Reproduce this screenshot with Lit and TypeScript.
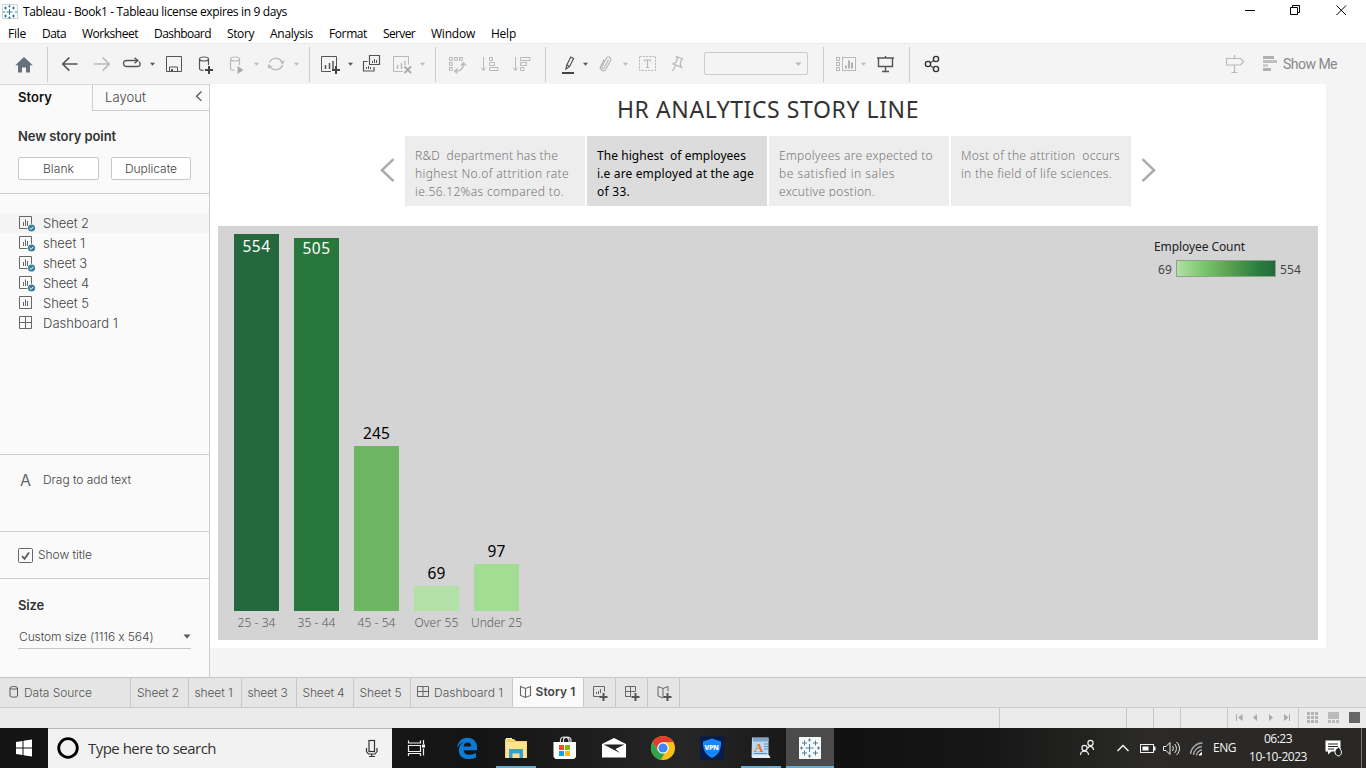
import { LitElement, html, svg, css, nothing, TemplateResult } from "lit";
import { customElement, property } from "lit/decorators.js";

/** A single line of text, tracked so that it spans `span` pixels. */
@customElement("text-run")
class TextRun extends LitElement {
  @property() text = "";
  @property({ type: Number }) span = 0;
  static styles = css`
    :host { display: block; white-space: pre; flex: none; overflow: visible; }
    .run { display: inline-block; }
  `;
  updated() {
    const el = this.renderRoot.querySelector(".run") as HTMLElement;
    el.style.letterSpacing = "0px";
    const natural = el.getBoundingClientRect().width;
    el.style.letterSpacing = `${(this.span - natural) / this.text.length}px`;
    this.style.width = `${this.span}px`;
  }
  render() {
    return html`<span class="run">${this.text}</span>`;
  }
}

const t = (text: string, span: number, cls = "") =>
  html`<text-run class=${cls} .text=${text} .span=${span}></text-run>`;

/** One strip cell: an svg tile covering x..x2 of a bar that starts at y with height h. */
const tile = (x: number, x2: number, y: number, h: number, body: unknown) =>
  html`<svg class="tile" width=${x2 - x} height=${h} viewBox="${x} ${y} ${x2 - x} ${h}" fill="none">${body}</svg>`;

const DARK = "#555";
const DIM = "#b9b9b9";

const caret = (x: number, c = DIM) => svg`<path d="M${x - 2.5} 62.8h5l-2.5 3z" fill=${c}/>`;
const plus = (x: number, y: number, r = 4) => svg`<path d="M${x - r} ${y}h${2 * r}M${x} ${y - r}v${2 * r}" stroke="#444" stroke-width="2"/>`;
const cyl = (x: number, c: string) => svg`<g stroke=${c} stroke-width="1.2"><ellipse cx=${x + 4.5} cy="59" rx="4.5" ry="2"/><path d="M${x} 59v9.5c0 1 1.5 1.8 4 1.8M${x + 9} 59v6"/></g>`;
const squares = (pts: number[][], s: number, c: string) =>
  pts.map(([x, y]) => svg`<rect x=${x} y=${y} width=${s} height=${s} stroke=${c} stroke-width="1"/>`);

const toolGroups: [number, number, unknown][][] = [
  [[0, 47, svg`<path d="M15.3 65.2 24 57l8.800 8.200H30V72.500h-4V67.500h-4v5h-4v-7.300z" fill="#66717d"/>`]],
  [
    [48, 86, svg`<path d="M62.500 64H77.500M69.300 57.600 62.700 64l6.600 6.600" stroke=${DARK} stroke-width="1.600"/>`],
    [86, 118, svg`<path d="M94 64h15M102.700 57.600l6.600 6.400-6.600 6.600" stroke=${DIM} stroke-width="1.500"/>`],
    [118, 160, svg`<path d="M137 60.500H127c-4.600 0-4.600 6 0 6h10.500c3 0 3.500-3 1.500-4.800M134.500 57.700l3.500 2.800-3.500 2.800" stroke=${DARK} stroke-width="1.300"/>${caret(152.500, DARK)}`],
    [160, 190, svg`<path d="M166.500 56.500h15v15h-15zM169.500 71.500v-4.500h8v4.500" stroke=${DARK}/><path d="M171 69h2v2.500h-2z" fill=${DARK}/>`],
    [190, 222, svg`${cyl(199.5, DARK)}${plus(209, 70)}`],
    [222, 262, svg`${cyl(230.5, DIM)}<path d="M237.500 66l6 4-6 4z" fill="#aaa"/>${caret(256.500)}`],
    [262, 309, svg`<path d="M269.500 62.500a7 6.500 0 0 1 12.500-1M282.500 65a7 6.500 0 0 1-12.500 1.800" stroke=${DIM} stroke-width="1.300"/><path d="M284.500 60.500l-1.500 4-3.200-2.800zM267.500 68.500l1-4.500 3.500 2.800z" fill=${DIM}/>${caret(296.500)}`],
  ],
  [
    [310, 356, svg`<path d="M331 71.500h-9.500v-15h15V66" stroke=${DARK}/><path d="M325.500 69v-4M329.500 69v-6M333 69v-8" stroke=${DARK} stroke-width="1.500"/>${plus(336, 70)}${caret(350.500, DARK)}`],
    [356, 386, svg`<path d="M369.500 55.500h10v9h-10zM367.500 61.500h-4v9.500h10.500v-4" stroke=${DARK} stroke-width="1.200"/><path d="M372.500 63v-2M374.500 63v-4M376.500 63v-3M366.500 69v-2M368.500 69v-3M370.500 69v-2" stroke=${DARK}/>`],
    [386, 435, svg`<path d="M403 71.500h-9.500v-15h15V64.500" stroke=${DIM}/><path d="M397.500 69v-4M401.500 69v-6M405 65v-4" stroke=${DIM} stroke-width="1.400"/><path d="M404.500 66.500l6.500 6.500M411 66.500l-6.500 6.500" stroke="#aaa" stroke-width="1.800"/>${caret(422.500)}`],
  ],
  [
    [436, 474, svg`${squares([[449.5, 57.5], [454.5, 57.5], [459.5, 57.5], [449.5, 62.5], [449.5, 67.5]], 2.8, DIM)}<path d="M463.500 63.500c0 5-3 7.500-8 7.800M461 65.500l2.500-2.800 2.300 2.800M457.500 68.500l-2.800 2.800 2.800 2.300" stroke=${DIM} stroke-width="1.300"/>`],
    [474, 506, svg`<path d="M483.500 57v13M481 67.500l2.500 3 2.500-3M489.500 57.500h3v3h-3zM489.500 62.500h5v3h-5zM489.500 67.500h8.500v3h-8.500z" stroke=${DIM}/>`],
    [506, 545, svg`<path d="M515.500 57v13M513 67.500l2.500 3 2.500-3M520.500 57.500h9.500v3h-9.500zM520.500 62.500h6v3h-6zM520.500 67.500h3.500v3h-3.500z" stroke=${DIM}/>`],
  ],
  [
    [546, 592, svg`<path d="M566 69l.8-4 4-8 2.800 1.400-4 8zM567 65l2.600 1.500" stroke=${DARK} stroke-width="1.200"/><path d="M562 72h12v2h-12z" fill="#444"/>${caret(585.500, DARK)}`],
    [592, 632, svg`<path d="M608.500 59.500l-4 8c-1 2-3.300.8-2.400-1l4-8c1.700-3 5.700-1 4.400 2l-4.500 8.500c-2 3.600-7 1.200-5.400-2.400l3.500-7" stroke=${DIM} stroke-width="1.200"/>${caret(625.500)}`],
    [632, 662, svg`<rect x="639.500" y="56.500" width="16" height="14" stroke=${DIM} stroke-dasharray="2.200 1"/><path d="M644.500 61.500v-1.500h6v1.500M647.500 60v7.500M646 67.500h3" stroke=${DIM} stroke-width="1.200"/>`],
    [662, 696, svg`<path d="M676.500 56.500l6 2.500-1.500 1.500-.7 3.500 1.200 3.300-8.500-3.400 3-1.700 1.300-3.200zM675.500 66l-3 5" stroke=${DIM} stroke-width="1.300"/>`],
    [696, 823, svg`<rect x="704.500" y="52.500" width="103" height="22" rx="1.500" stroke="#cdcdcd"/><path d="M795 62.500h6.500l-3.200 3.300z" fill=${DIM}/>`],
  ],
  [
    [824, 870, svg`${squares([[836.5, 57.5], [836.5, 62.5], [836.5, 67.5]], 3, DIM)}<rect x="842.500" y="57.500" width="13" height="13" stroke=${DIM}/><path d="M846 68.500v-3M849 68.500v-8M852 68.500v-6" stroke="#aaa" stroke-width="1.800"/>${caret(863.500)}`],
    [870, 909, svg`<path d="M877 58h17M878.500 58v8.500h14V58M885.500 66.500v5M882 71.500h7M885.500 56v2" stroke=${DARK} stroke-width="1.400"/>`],
  ],
  [[910, 950, svg`<path d="M930 63l4-2.500M930 65.500l4 2.500" stroke=${DARK} stroke-width="1.300"/><g stroke="#333" stroke-width="1.400"><circle cx="928" cy="64" r="2.600"/><circle cx="936" cy="59" r="2.600"/><circle cx="936" cy="69" r="2.600"/></g>`]],
];

const chartIcon = (checked: boolean) => svg`
  <path d="M1.500 2.500h12v12h-12z" stroke="#666"/><path d="M5.500 12V8M7.500 12V5.500M9.500 12V7" stroke="#666"/>
  ${checked ? svg`<circle cx="13.500" cy="14" r="4.200" fill="#fafafa"/><circle cx="13.500" cy="14" r="3.600" fill="#397f99"/><path d="M11.700 14l1.400 1.400 2.300-2.600" stroke="#fff"/>` : nothing}`;
const gridIcon = svg`<path d="M1.500 2.500h12v12h-12zM7.500 2.500v12M1.500 8.500h12" stroke="#666"/>`;

const sheets: [string, number, string][] = [
  ["Sheet 2", 46, "used"], ["sheet 1", 42, "used"], ["sheet 3", 44, "used"],
  ["Sheet 4", 46, "used"], ["Sheet 5", 46, "free"], ["Dashboard 1", 75, "dash"],
];

const points: { lines: [string, number][]; active?: boolean }[] = [
  { lines: [["R&D  department has the", 143], ["highest No.of attrition rate", 154], ["ie.56.12%as compared to.", 149]] },
  { lines: [["The highest  of employees", 149], ["i.e are employed at the age", 157], ["of 33.", 33]], active: true },
  { lines: [["Empolyees are expected to", 154], ["be satisfied in sales", 116], ["excutive postion.", 96]] },
  { lines: [["Most of the attrition  occurs", 159], ["in the field of life sciences.", 151]] },
];

const bars = [
  { label: "25 - 34", lw: 38, value: "554", vw: 28, h: 377, fill: "#24693d", place: "top" },
  { label: "35 - 44", lw: 38, value: "505", vw: 28, h: 373, fill: "#28783e", place: "edge" },
  { label: "45 - 54", lw: 38, value: "245", vw: 27, h: 165, fill: "#6fb663", place: "out" },
  { label: "Over 55", lw: 44, value: "69", vw: 18, h: 25, fill: "#b3e0a6", place: "out" },
  { label: "Under 25", lw: 51, value: "97", vw: 18, h: 47, fill: "#a3dc93", place: "out" },
];

const plusIcon = (x: number) => svg`<path d="M${x - 3.5} 697h8M${x + 0.5} 693v8" stroke="#555" stroke-width="2"/>`;

const appIcons: [number, number, string, unknown][] = [
  [392, 440, "", svg`<path d="M408.500 743v-2.500M420.500 743v-2.500M408.500 740.500v2.500h12v-2.500M408.500 745.500h12v6h-12zM408.500 756v-2.500h12v2.500M423.500 740v4M423.500 748.500v7" stroke="#f2f2f2" stroke-width="1.200"/><path d="M422 744.500h3v3h-3z" fill="#fff"/>`],
  [440, 493, "", svg`<path d="M457 748c.8-6.500 5-10.300 10.300-10.300 6.200 0 9.700 4.300 9.700 9.500v3h-13.400c.2 3 2.700 4.600 6 4.600 2.300 0 4.500-.6 6.400-1.700v4.300c-2 1-4.700 1.600-7.400 1.600-6 0-9.800-3.400-9.800-8.800 0-3.400 1.800-6.300 4.900-8-3 .8-5.200 2.700-6.700 5.800zM463.600 746.500h7.600c0-2.400-1.200-3.900-3.600-3.900-2.200 0-3.700 1.500-4 3.900z" fill="#0c7bd8" fill-rule="evenodd"/>`],
  [493, 540, "", svg`<path d="M505 739h9l2 2h11v17h-22z" fill="#f3d06b"/><path d="M506 742h20.500v16H506z" fill="#fbe295"/><path d="M509 749h14v9h-3.500v-4.500h-7v4.500H509z" fill="#3a9fd0"/><path d="M506 738.500h6" stroke="#fff3c4"/><path d="M496 766h40v2h-40z" fill="#69abd0"/>`],
  [540, 589, "", svg`<path d="M553.500 742h22.500v15l-2 2h-18.500l-2-2z" fill="#fff"/><path d="M560.500 742v-2c0-3.500 7-4.500 8.500 0v2M563.500 742v-2.500c1-3.500 6.500-3 7.500 0v2.500" stroke="#ddd" stroke-width="1.200"/><path d="M559 745h5v5h-5z" fill="#f05022"/><path d="M565 745h5v5h-5z" fill="#7fba00"/><path d="M559 751h5v5h-5z" fill="#00a4ef"/><path d="M565 751h5v5h-5z" fill="#ffb900"/>`],
  [589, 638, "", svg`<path d="M602 744l12-6 12 6v13.500h-24z" fill="#fff"/><path d="M603.500 744.500h21l-9 4.500 4.500 4z" fill="#222"/>`],
  [638, 687, "", svg`<circle cx="663" cy="748" r="12" fill="#fbc116"/><path d="M652.600 742a12 12 0 0 0 8.400 17.800l5.500-9.800-8.500 1z" fill="#2da44e"/><path d="M652.600 742a12 12 0 0 1 20.900 0H663l-5 8.500z" fill="#e33b2e"/><circle cx="663" cy="748" r="5.800" fill="#fff"/><circle cx="663" cy="748" r="4.600" fill="#4285f4"/>`],
  [687, 736, "", svg`<path d="M700 736.500h24v23h-24z" fill="#061d4b"/><path d="M712 738.500l9 3c.5 8-2.500 13.500-9 16.500-6.500-3-9.500-8.500-9-16.500z" fill="#1687f8"/>`],
  [736, 786, "", svg`<path d="M752 737.500h16.500v18.500l1.500 2h-16.500l-2-1z" fill="#bcd9f0"/><path d="M753 738h15.500v3.500H753z" fill="#7ba6ce"/><path d="M764 744h4M764 746.500h4M764 749h4M754 753.500h13" stroke="#5c8fc7"/><path d="M752 755h17l1.500 3h-18z" fill="#e9edf1"/><path d="M741 766h40v2h-40z" fill="#69abd0"/>`],
  [786, 834, "on", svg`<path d="M799 737h22v22h-22z" fill="#f5f7f8"/><path d="M809.500 744v8M805.500 748h8M804.500 740.500v5M802 743h5M815.500 740.500v5M813 743h5M804.500 750.500v5M802 753h5M815.500 750.500v5M813 753h5M809.500 738.500v3M808 740h3M809.500 754.500v3M808 756h3M801.500 746.500v3M800 748h3M818.500 746.500v3M817 748h3" stroke="#4e7f9c"/><path d="M786 766h48v2h-48z" fill="#69abd0"/>`],
];

@customElement("app-root")
class AppRoot extends LitElement {
  static styles = css`
    :host { display: flex; flex-direction: column; width: 1366px; height: 768px; overflow: hidden; background: #f4f4f4; font-family: "Open Sans", "Noto Sans", sans-serif; font-size: 12px; line-height: 18px; color: #000; }
    * { box-sizing: border-box; }
    svg { display: block; flex: none; }
    .row { display: flex; align-items: center; }
    .titlebar { height: 24px; background: #fff; }
    .titlebar .tail { margin-left: auto; }
    .menu { height: 19px; background: #fff; padding-left: 8px; }
    .menu text-run { margin-right: 16px; line-height: 19px; }
    .toolbar { height: 41px; background: #f4f4f4; border-top: 1px solid #ebebeb; display: flex; }
    .group { display: flex; align-items: center; }
    .group::after { content: ""; width: 1px; height: 35px; background: #cdcdcd; }
    .group:last-of-type::after { display: none; }
    .show { margin-left: auto; display: flex; align-items: center; width: 146px; }
    .showme { font-family: Roboto, sans-serif; font-size: 14px; color: #888; margin-left: 3px; }
    .main { display: flex; height: 593px; }

    .side { width: 210px; background: #fafafa; border-right: 1px solid #cdcdcd; display: flex; flex-direction: column; font-family: Inter, "Open Sans", sans-serif; font-weight: 300; color: #444; }
    .modes { display: flex; height: 27px; }
    .mode { width: 92px; padding: 3px 0 0 18px; border-top: 1px solid #d8d8d8; font-weight: 600; color: #111; font-size: 13px; }
    .mode.off { width: 117px; padding-left: 12px; border-left: 1px solid #cdcdcd; border-bottom: 1px solid #cdcdcd; font-weight: 300; color: #444; display: flex; }
    .mode.off svg { margin: 2px 0 0 48px; }
    .newpoint { height: 83px; padding: 16px 18px 0; border-bottom: 1px solid #cdcdcd; }
    .heading { font-weight: 600; font-size: 13px; color: #333; }
    .buttons { display: flex; gap: 12px; margin-top: 12px; }
    .btn { height: 23px; width: 81px; border: 1px solid #c8c8c8; border-radius: 2px; background: #fff; display: flex; justify-content: center; align-items: center; }
    .btn + .btn { width: 80px; }
    .sheets { height: 261px; padding-top: 19px; border-bottom: 1px solid #cdcdcd; font-size: 13px; }
    .sheet { height: 20px; display: flex; align-items: center; padding-left: 18px; gap: 7px; }
    .sheet:first-child { background: #f4f4f4; }
    .drag { height: 77px; border-bottom: 1px solid #cdcdcd; display: flex; padding: 16px 0 0 20px; }
    .drag .txt { margin-left: 12px; }
    .glyph { font-size: 16px; font-weight: 400; color: #666; }
    .title-opt { height: 47px; border-bottom: 1px solid #cdcdcd; padding-left: 18px; gap: 5px; }
    .size { padding: 17px 18px 0; }
    .select { height: 24px; width: 173px; margin-top: 11px; border-bottom: 1px solid #c4c4c4; display: flex; align-items: center; justify-content: space-between; padding-left: 1px; }

    .canvas { width: 1116px; height: 564px; background: #fff; padding: 0 8px; }
    .story-title { height: 52px; display: flex; justify-content: center; align-items: center; padding-bottom: 2px; }
    .headline { font-family: "Noto Sans", sans-serif; font-size: 23px; line-height: 30px; color: #333; }
    .nav { display: flex; height: 70px; justify-content: center; align-items: center; gap: 9px; }
    .cards { display: flex; gap: 2px; height: 70px; }
    .card { width: 180px; height: 70px; background: #ededed; padding: 10.500px 10px 0; color: #777; font-weight: 300; }
    .card.active { background: #dcdcdc; color: #000; font-weight: 400; }
    .clip { height: 50px; overflow: hidden; font-family: "Noto Sans", sans-serif; }
    .plot { margin-top: 20px; height: 414px; background: #d4d4d4; display: flex; justify-content: space-between; }
    .bars { display: flex; gap: 15px; padding-left: 16px; height: 414px; align-items: flex-end; }
    .col { width: 45px; display: flex; flex-direction: column; align-items: center; padding-bottom: 8px; }
    .bar { width: 45px; display: flex; justify-content: center; }
    .bar.top { padding-top: 2px; }
    .val { font-family: "Noto Sans", sans-serif; font-size: 15.500px; line-height: 20px; color: #fff; }
    .val.out { color: #000; margin-bottom: 3px; }
    .cat { font-size: 12px; color: #5c5c5c; height: 18px; margin-top: 3px; font-weight: 300; font-family: "Noto Sans", sans-serif; }
    .legend { width: 164px; padding-top: 12px; color: #222; font-family: "Noto Sans", sans-serif; }
    .scale { display: flex; align-items: center; gap: 4px; padding-left: 4px; margin-top: 4px; color: #444; }
    .ramp { width: 100px; height: 17px; margin-bottom: 2px; border: 1px solid #8fa389; background: linear-gradient(90deg, #b3e0a6, #7dc871 25%, #5ea654 50%, #2b7f41 82%, #24693d); }

    .tabs { height: 31px; border-top: 1px solid #c6c6c6; border-bottom: 1px solid #cbcbcb; background: #e5e5e5; display: flex; font-family: Inter, "Open Sans", sans-serif; font-weight: 300; color: #555; }
    .tab { border-right: 1px solid #c8c8c8; display: flex; align-items: center; justify-content: center; gap: 5px; }
    .tab.source { width: 131px; justify-content: flex-start; padding-left: 8px; gap: 4px; }
    .w58, .w53, .w55, .w57, .w102 { padding-right: 3px; }
    .w58 { width: 58px; } .w53 { width: 53px; } .w55 { width: 55px; } .w57 { width: 57px; } .w102 { width: 102px; } .w71 { width: 71px; }
    .tab.current { background: #fafafa; font-weight: 600; color: #444; gap: 4px; padding: 0 2px 2px 0; }
    .status { height: 20px; background: #ebebeb; display: flex; justify-content: flex-end; }
    .taskbar { height: 40px; background: linear-gradient(90deg, #22211d 0, #141414 35%, #262626 50%, #111 62%, #151615 72%, #2b2a29 84%, #292724 100%); display: flex; color: #f4f4f4; }
    .start { background: #141414; }
    .search { width: 344px; background: #f2f2f2; border-top: 1px solid #b8b8b8; display: flex; align-items: center; font-size: 15px; color: #333; }
    .query { padding-bottom: 2px; }
    .search .mic { margin-left: auto; }
    .cell { display: grid; }
    .cell > * { grid-area: 1 / 1; }
    .on { background: #4b4b4b; }
    .app-text { align-self: center; justify-self: center; font-size: 7px; font-weight: 800; line-height: 10px; }
    .pad-letter { justify-self: start; align-self: center; font-family: "Liberation Serif", serif; font-size: 13px; margin-left: 18px; color: #e2721d; font-weight: 700; }
    .tray { margin-left: auto; display: flex; align-items: center; }
    .clock { width: 66px; display: flex; flex-direction: column; align-items: center; margin-left: 9px; }
  `;

  private titleBar() {
    return html`<div class="row titlebar">
      ${tile(0, 23, 0, 24, svg`<path d="M2.500 4.500h15v14h-15z" fill="#fff" stroke="#c9d2d6"/><path d="M9.500 9v6M6.500 12h6M5.500 6.500v3M4 8h3M13.500 6.500v3M12 8h3M5.500 14.500v3M4 16h3M13.500 14.500v3M12 16h3M9.500 5v2.500M8.500 6.500h2M9.500 16.500V19M8.500 17.500h2M3 12h2M15 12h2" stroke="#33789b"/>`)}
      ${t("Tableau - Book1 - Tableau license expires in 9 days", 264)}
      <div class="tail">${tile(1230, 1366, 0, 24, svg`<path d="M1245 10.500h10M1290.500 7.500h7v7h-7zM1292.500 7V5.500h7v7H1298M1336.500 5.500l9.500 9.500M1346 5.500l-9.500 9.500" stroke="#000"/>`)}</div>
    </div>
    <div class="row menu">
      ${([["File", 18], ["Data", 24], ["Worksheet", 56], ["Dashboard", 57], ["Story", 27], ["Analysis", 43], ["Format", 38], ["Server", 32], ["Window", 44], ["Help", 25]] as [string, number][]).map(([s, w]) => t(s, w))}
    </div>`;
  }

  private toolBar() {
    return html`<div class="toolbar">
      ${toolGroups.map((g) => html`<div class="group">${g.map(([a, b, c]) => tile(a, b, 44, 40, c))}</div>`)}
      <span class="show">
        ${tile(1220, 1280, 44, 40, svg`<path d="M1226.500 58.500h14l3 3-3 3.500h-14zM1234.500 55v3.500M1234.500 65v7.500M1231.500 72.500h6" stroke=${DIM} stroke-width="1.200"/><path d="M1263 56h11v3h-11zM1263 68h8v3h-8z" fill="#b0b0b0"/><path d="M1263 60h14v3h-14z" fill="#c0c0c0"/><path d="M1263 64h5v3h-5z" fill="#d0d0d0"/>`)}
        ${t("Show Me", 54, "showme")}
      </span>
    </div>`;
  }

  private side() {
    return html`<div class="side">
      <div class="modes">
        <div class="mode">${t("Story", 34)}</div>
        <div class="mode off">${t("Layout", 41)}<svg width="9" height="13" fill="none"><path d="M7.500 1.500l-5 4.700 5 4.700" stroke="#555" stroke-width="1.300"/></svg></div>
      </div>
      <div class="newpoint">
        <div class="heading">${t("New story point", 98)}</div>
        <div class="buttons"><div class="btn">${t("Blank", 31)}</div><div class="btn">${t("Duplicate", 52)}</div></div>
      </div>
      <div class="sheets">
        ${sheets.map(([name, w, kind]) => html`<div class="sheet">
          <svg width="18" height="18" fill="none">${kind === "dash" ? gridIcon : chartIcon(kind === "used")}</svg>${t(name, w)}
        </div>`)}
      </div>
      <div class="drag">${t("A", 11, "glyph")}${t("Drag to add text", 88, "txt")}</div>
      <div class="row title-opt">
        <svg width="15" height="15" fill="none"><rect x=".5" y=".5" width="14" height="14" rx="1" stroke="#666"/><path d="M4 8l2.500 2.800L11 4.500" stroke="#555" stroke-width="1.700"/></svg>
        ${t("Show title", 54)}
      </div>
      <div class="size">
        <div class="heading">${t("Size", 26)}</div>
        <div class="select">${t("Custom size (1116 x 564)", 136)}<svg width="8" height="5"><path d="M.5.5h7L4 4.500z" fill="#555"/></svg></div>
      </div>
    </div>`;
  }

  private canvas() {
    const arrow = (d: string) => html`<svg width="16" height="26" fill="none"><path d=${d} stroke="#ababab" stroke-width="2.500"/></svg>`;
    return html`<div class="canvas">
      <div class="story-title">${t("HR ANALYTICS STORY LINE", 302, "headline")}</div>
      <div class="nav">
        ${arrow("M13.5 1.200L2 12.200l11.500 11")}
        <div class="cards">${points.map((p) => html`<div class="card ${p.active ? "active" : ""}"><div class="clip">${p.lines.map(([s, w]) => t(s, w))}</div></div>`)}</div>
        ${arrow("M2.500 1.200l11.500 11-11.500 11")}
      </div>
      <div class="plot">
        <div class="bars">
          ${bars.map((b) => html`<div class="col">
            ${b.place === "out" ? t(b.value, b.vw, "val out") : nothing}
            <div class="bar ${b.place}" style="height:${b.h}px;background:${b.fill}">${b.place === "out" ? nothing : t(b.value, b.vw, "val")}</div>
            ${t(b.label, b.lw, "cat")}
          </div>`)}
        </div>
        <div class="legend">
          ${t("Employee Count", 91)}
          <div class="scale">${t("69", 14)}<div class="ramp"></div>${t("554", 21)}</div>
        </div>
      </div>
    </div>`;
  }

  private sheetTabs() {
    const tab = (s: string, w: number, cls: string, icon: TemplateResult | typeof nothing = nothing) => html`<div class="tab ${cls}">${icon}${t(s, w)}</div>`;
    const book = svg`<path d="M520.500 687.500l5 2 5-2v9l-5 2-5-2zM525.500 689.500v9" stroke="#666" stroke-width="1.100"/>`;
    return html`<div class="tabs">
      ${tab("Data Source", 68, "source", html`<svg width="12" height="16" fill="none"><path d="M2 3v8c0 1.500 7.500 1.500 7.500 0V3c0-2-7.500-2-7.500 0 0 1.500 7.500 1.500 7.500 0" stroke="#555"/></svg>`)}
      ${tab("Sheet 2", 42, "w58")}${tab("sheet 1", 38, "w53")}${tab("sheet 3", 40, "w55")}${tab("Sheet 4", 42, "w57")}${tab("Sheet 5", 42, "w57")}
      ${tab("Dashboard 1", 69, "w102", html`<svg width="12" height="13" fill="none"><path d="M.5.5h11v10H.5zM6 .5v10M.5 5.500h11" stroke="#666"/></svg>`)}
      ${tab("Story 1", 40, "w71 current", tile(519, 532, 686, 14, book))}
      <div class="tab">${tile(584, 615, 678, 29, svg`<path d="M600 696.500h-6.500v-10h11v5" stroke="#666"/><path d="M596.500 694v-2M598.500 694v-3M600.500 693v-4" stroke="#666"/>${plusIcon(603)}`)}</div>
      <div class="tab">${tile(616, 647, 678, 29, svg`<path d="M631 696.500h-5.500v-10h10v5M630.500 686.500v10M625.500 691.500h10" stroke="#666"/>${plusIcon(635)}`)}</div>
      <div class="tab">${tile(648, 679, 678, 29, svg`<path d="M663 698l-5-2v-9.500l5 2 5-2v5M663 688.500v9.500" stroke="#666"/>${plusIcon(667)}`)}</div>
    </div>
    <div class="status">${tile(999, 1366, 708, 20, svg`
      <path d="M999.500 708v20M1126.500 708v20M1153.500 708v20M1180.500 708v20M1227.500 708v20M1298.500 708v20" stroke="#c8c8c8"/>
      <path d="M1236.500 714v7M1289.500 714v7" stroke="#aaa"/><path d="M1242.500 714v7l-4.500-3.500zM1257 714v7l-4-3.500zM1269 714v7l4-3.500zM1284 714v7l4.500-3.500z" fill="#aaa"/>
      ${[1307, 1311, 1315].map((x) => [712, 716, 720].map((y) => svg`<path d="M${x} ${y}h3v3h-3z" fill="#b3b3b3"/>`))}
      <path d="M1328 712h11v7h-11zM1328 720h3v3h-3zM1332 720h3v3h-3zM1336 720h3v3h-3z" fill="#bbb"/><path d="M1349 712h11v11h-11z" fill="#666"/>`)}</div>`;
  }

  private taskBar() {
    return html`<div class="taskbar">
      <div class="start">${tile(0, 48, 728, 40, svg`<path d="M16 742l6.500-1v6.500H16zM23.500 740.800L32 739.600v7.900h-8.500zM16 748.500h6.500v6.500l-6.500-1zM23.500 748.500H32v7.900l-8.500-1.200z" fill="#fff"/>`)}</div>
      <div class="search">
        ${tile(48, 88, 729, 39, svg`<circle cx="68" cy="748" r="9.300" stroke="#000" stroke-width="2.800"/>`)}
        ${t("Type here to search", 128, "query")}
        <div class="mic">${tile(360, 392, 729, 39, svg`<rect x="369" y="740.500" width="5.500" height="11" stroke="#333" stroke-width="1.200"/><path d="M366.500 748v3.500l2 2.500h6.500l2-2.500V748M371.700 754v2.500M369 756.500h6" stroke="#333" stroke-width="1.200"/>`)}</div>
      </div>
      ${appIcons.map(([a, b, cls, body]) => html`<div class="cell ${cls}">${tile(a, b, 728, 40, body)}${a === 687 ? t("VPN", 14, "app-text") : nothing}${a === 736 ? t("A", 9, "pad-letter") : nothing}</div>`)}
      <div class="tray">
        ${tile(1070, 1213, 728, 40, svg`
          <g stroke="#f2f2f2" stroke-width="1.200"><circle cx="1090.500" cy="743" r="2.600"/><circle cx="1084.500" cy="748" r="2.600"/><path d="M1080.500 755c0-5 8-5 8 0M1087.500 748.500c2-3.500 6-2 6 1.500"/></g>
          <path d="M1117.500 751l5.500-5.500 5.500 5.500" stroke="#f2f2f2" stroke-width="1.500"/>
          <rect x="1140.500" y="744.500" width="13" height="8" stroke="#f2f2f2"/><path d="M1142.500 746.500h6v4h-6zM1154 746.500h1.500v4h-1.500z" fill="#fff"/>
          <path d="M1163.500 746.500h2.500l4-4v12l-4-4h-2.500zM1172.500 746c1 1 1 4 0 5M1174.500 744c2.500 2 2.500 7 0 9M1176.500 742c4 3.500 4 9.500 0 13" stroke="#f2f2f2"/>
          <path d="M1190.500 754a12 12 0 0 1 12-11M1193.500 755a9 9 0 0 1 8.500-8.500M1196.500 755.500a6 6 0 0 1 5.500-5.500" stroke="#aaa" stroke-width="1.400"/><path d="M1199 755l2.500-2.500v2.500z" fill="#fff" stroke="#fff"/>`)}
        ${t("ENG", 23)}
        <div class="clock">${t("06:23", 28)}${t("10-10-2023", 58)}</div>
        ${tile(1311, 1366, 728, 40, svg`<path d="M1325.500 740.500h15v11h-9l-3.500 3v-3h-2.500z" fill="#fff"/><path d="M1328 744h10M1328 746.500h10M1328 749h6" stroke="#222"/><path d="M1338 747.500c-3.500 2-4.500 6.500 0 8.500 4 0 4.500-5 1.500-8" fill="#222" stroke="#fff"/><path d="M1361.500 728v40" stroke="#777"/>`)}
      </div>
    </div>`;
  }

  render() {
    return html`${this.titleBar()}${this.toolBar()}
      <div class="main">${this.side()}${this.canvas()}</div>
      ${this.sheetTabs()}${this.taskBar()}`;
  }
}
